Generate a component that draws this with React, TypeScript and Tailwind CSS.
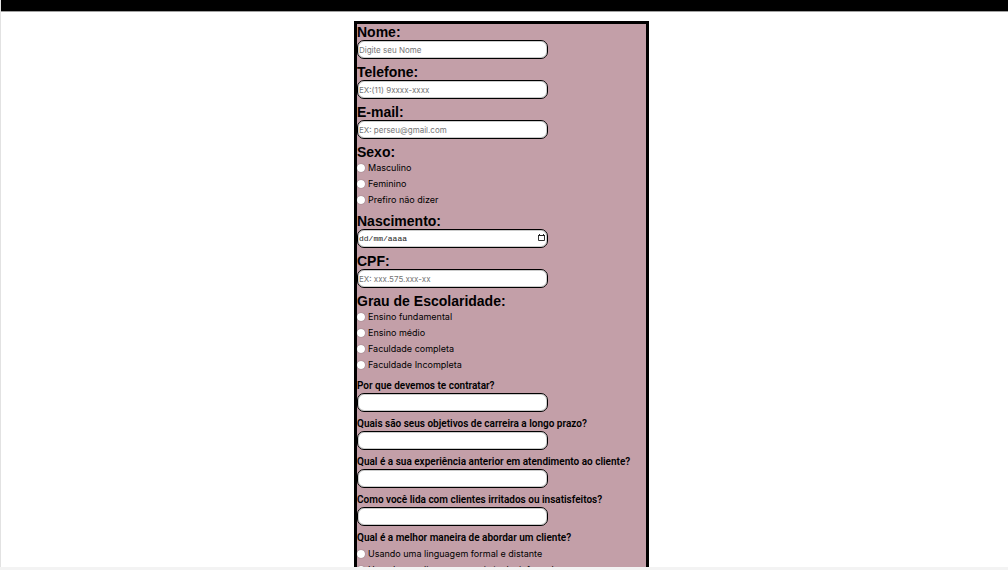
import React from "react";

type FieldProps = {
  id: string;
  label: string;
  placeholder?: string;
};

const inputStyle =
  "block h-[19px] w-[191px] rounded-[7px] border border-black bg-white pl-px font-['Inter',sans-serif] text-[8px] leading-none text-black shadow-[inset_0_0_0_1px_rgba(0,0,0,0.2)] placeholder:text-[#757575]";

function Field({ id, label, placeholder }: FieldProps) {
  return (
    <div>
      <label htmlFor={id} className="block h-4 text-sm leading-4 font-bold">
        {label}
      </label>
      <input id={id} type="text" placeholder={placeholder} className={inputStyle} />
    </div>
  );
}

function DateField({ id, label }: FieldProps) {
  return (
    <div>
      <label htmlFor={id} className="block h-4 text-sm leading-4 font-bold">
        {label}
      </label>
      <div className="relative w-[191px]">
        <input
          id={id}
          type="text"
          placeholder="dd/mm/aaaa"
          className="block h-[19px] w-[191px] rounded-[7px] border border-black bg-white pl-px font-['Liberation_Mono',monospace] text-[8px] leading-none text-black shadow-[inset_0_0_0_1px_rgba(0,0,0,0.2)] placeholder:text-[#222222]"
        />
        <button type="button" aria-label="Abrir calendário" className="absolute top-[5px] right-[3px]">
          <svg width="7" height="8" viewBox="0 0 7 8" fill="none" className="block">
            <path d="M.5 1.5h6v5h-6z" stroke="#333" />
            <path d="M0 1h7v1H0zM1 0h1v1H1zM5 0h1v1H5z" fill="#222" />
          </svg>
        </button>
      </div>
    </div>
  );
}

function Question({ id, label }: FieldProps) {
  return (
    <div>
      <label
        htmlFor={id}
        className="block h-[15px] font-['Roboto',sans-serif] text-[10px] leading-[15px] font-semibold whitespace-nowrap"
      >
        {label}
      </label>
      <input id={id} type="text" className={inputStyle} />
    </div>
  );
}

type ChoicesProps = {
  name: string;
  legend: string;
  options: string[];
  small?: boolean;
};

function Choices({ name, legend, options, small }: ChoicesProps) {
  return (
    <fieldset>
      <legend
        className={
          small
            ? "block font-['Roboto',sans-serif] text-[10px] leading-4 font-semibold"
            : "block text-sm leading-4 font-bold"
        }
      >
        {legend}
      </legend>
      {options.map((option) => (
        <label
          key={option}
          className="flex h-4 items-center gap-[3px] font-['Inter',sans-serif] text-[9px] leading-4"
        >
          <input
            type="radio"
            name={name}
            value={option}
            className="mb-px size-2 shrink-0 appearance-none rounded-full bg-white shadow-[0_0_1px_rgba(0,0,0,0.6)] checked:bg-black"
          />
          {option}
        </label>
      ))}
    </fieldset>
  );
}

export default function App() {
  return (
    <div className="flex h-screen flex-col bg-[#f3f3f3] font-['Liberation_Sans',Arial,sans-serif] text-black">
      <main className="min-h-0 flex-1 overflow-hidden border-l border-[#e2e2e2] bg-white">
        <header className="h-3 border-b border-[#a0a0a0] bg-black" />
        <div className="flex justify-center pt-[9px] pr-[6px]">
          <form className="flex w-[295px] flex-col gap-[5px] border-[3px] border-black bg-[#c39fa8] pb-4">
            <Field id="nome" label="Nome:" placeholder="Digite seu Nome" />
            <Field id="telefone" label="Telefone:" placeholder="EX:(11) 9xxxx-xxxx" />
            <Field id="email" label="E-mail:" placeholder="EX: perseu@gmail.com" />
            <Choices name="sexo" legend="Sexo:" options={["Masculino", "Feminino", "Prefiro não dizer"]} />
            <DateField id="nascimento" label="Nascimento:" />
            <Field id="cpf" label="CPF:" placeholder="EX: xxx.575.xxx-xx" />
            <Choices
              name="escolaridade"
              legend="Grau de Escolaridade:"
              options={["Ensino fundamental", "Ensino médio", "Faculdade completa", "Faculdade Incompleta"]}
            />
            <div className="flex flex-col gap-1">
              <Question id="contratar" label="Por que devemos te contratar?" />
              <Question id="objetivos" label="Quais são seus objetivos de carreira a longo prazo?" />
              <Question id="experiencia" label="Qual é a sua experiência anterior em atendimento ao cliente?" />
              <Question id="irritados" label="Como você lida com clientes irritados ou insatisfeitos?" />
              <Choices
                small
                name="abordagem"
                legend="Qual é a melhor maneira de abordar um cliente?"
                options={["Usando uma linguagem formal e distante", "Usando uma linguagem amigável e informal"]}
              />
            </div>
          </form>
        </div>
      </main>
      <footer className="h-[3px] shrink-0" />
    </div>
  );
}
